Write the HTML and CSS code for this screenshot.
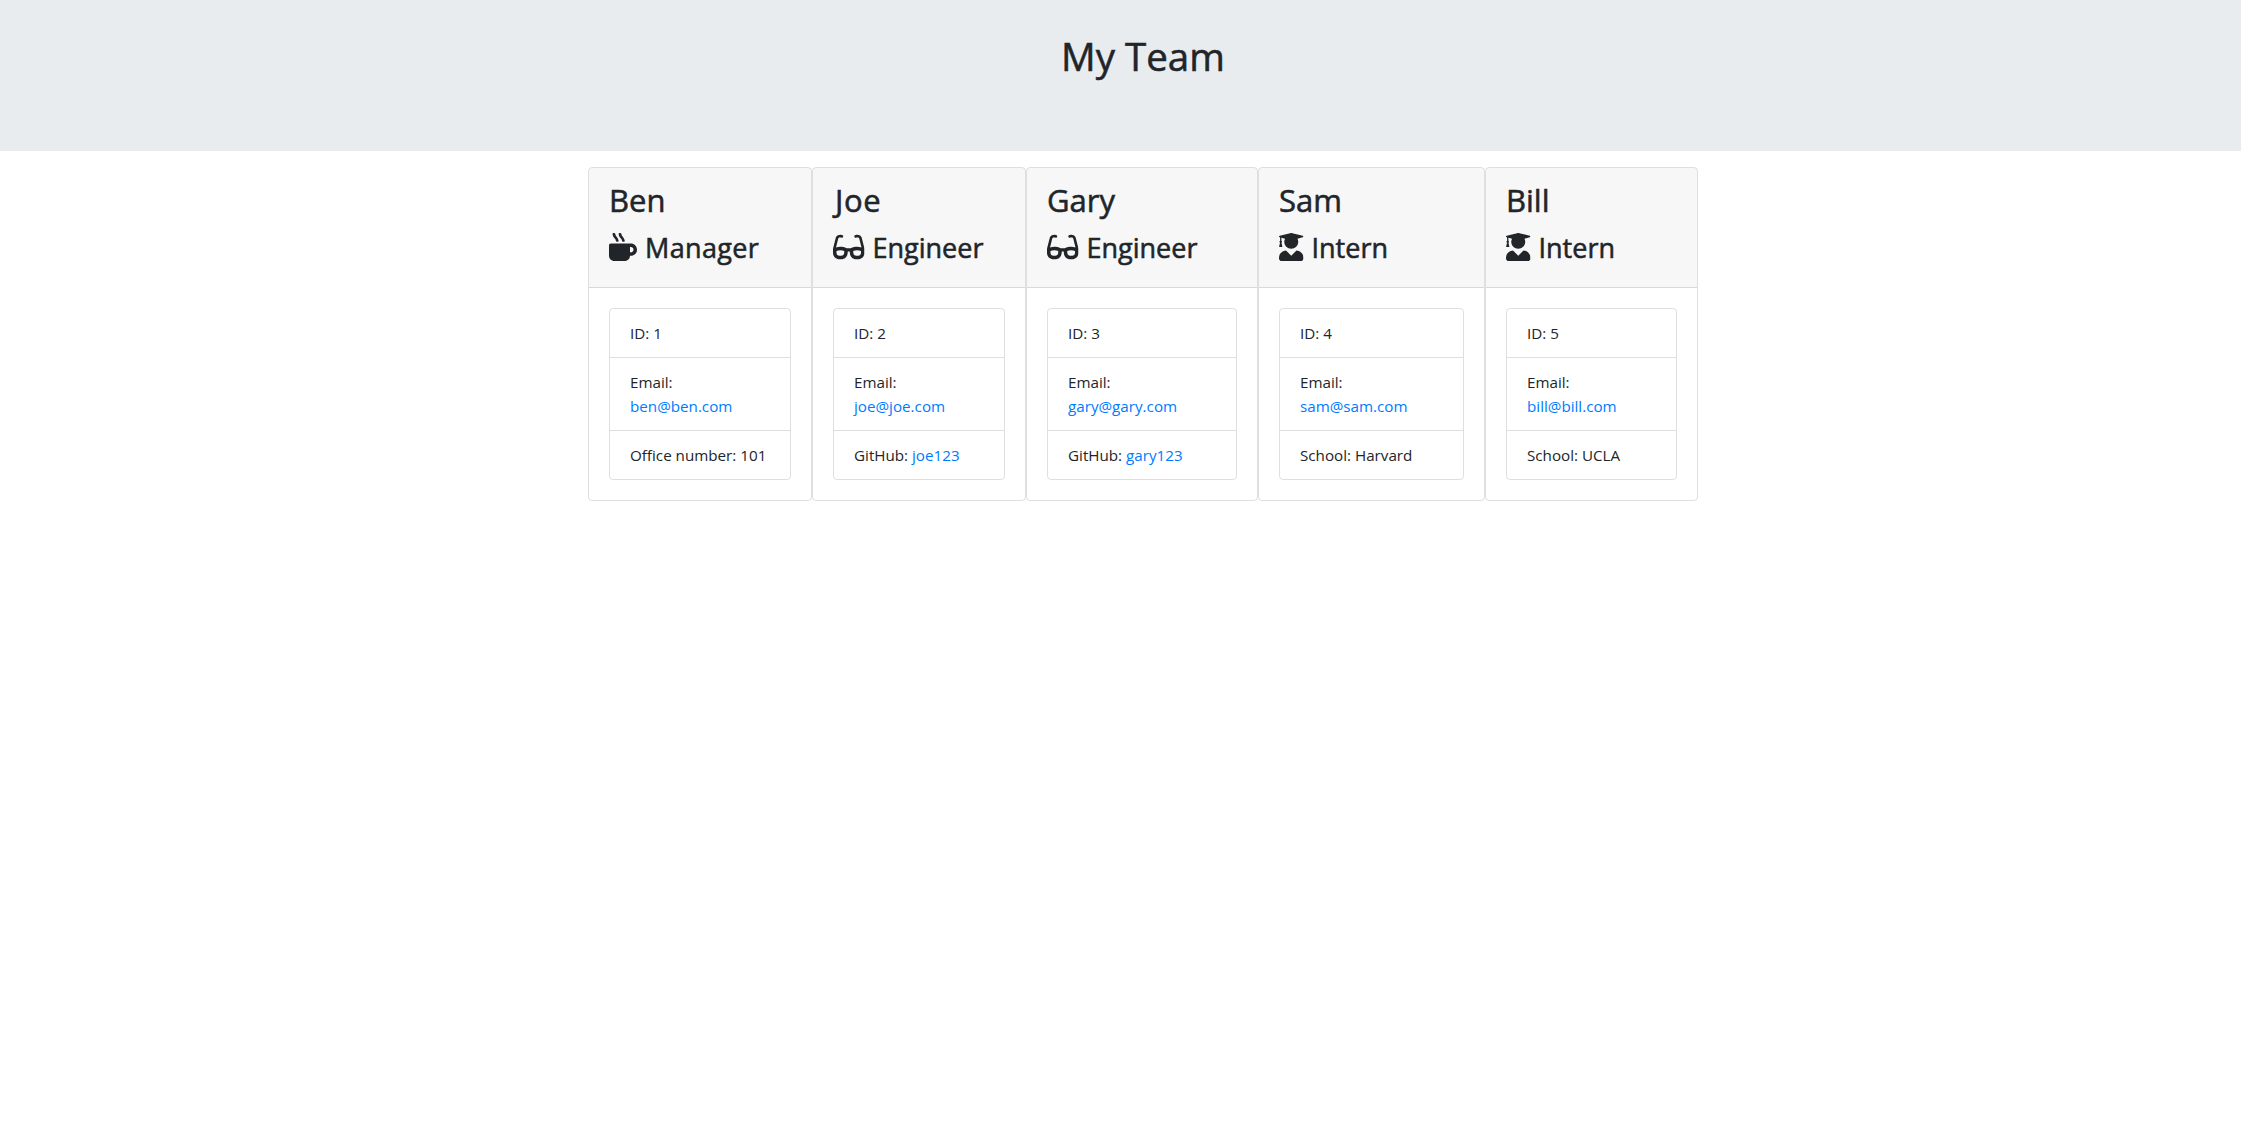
FILE: index.html
```html
<!DOCTYPE html>
<html lang="en">
<head>
<meta charset="utf-8">
<title>My Team</title>
<link rel="stylesheet" href="styles.css">
</head>
<body>
<svg class="sprite" aria-hidden="true">
  <symbol id="mug" viewBox="0 0 512 512"><path d="M127.1 146.5c1.3 7.7 8 13.5 16 13.5h16.5c9.8 0 17.6-8.5 16.3-18-3.8-28.2-16.4-54.2-36.6-74.7-14.4-14.7-23.6-33.3-26.4-53.5C111.8 5.9 105 0 96.8 0H80.4C70.6 0 63 8.5 64.1 18c3.9 31.9 18 61.3 40.6 84.4 12 12.2 19.7 27.5 22.4 44.1zm112 0c1.3 7.7 8 13.5 16 13.5h16.5c9.8 0 17.6-8.5 16.3-18-3.8-28.2-16.4-54.2-36.6-74.7-14.4-14.7-23.6-33.3-26.4-53.5C223.8 5.9 217 0 208.8 0h-16.4c-9.8 0-17.5 8.5-16.3 18 3.9 31.9 18 61.3 40.6 84.4 12 12.2 19.7 27.5 22.4 44.1zM400 192H32c-17.7 0-32 14.3-32 32v192c0 53 43 96 96 96h192c53 0 96-43 96-96h16c61.8 0 112-50.2 112-112s-50.2-112-112-112zm0 160h-16v-96h16c26.5 0 48 21.5 48 48s-21.5 48-48 48z"/></symbol>
  <symbol id="glasses" viewBox="0 0 576 512"><path d="M574.1 280.37L528.75 98.66c-5.91-23.7-21.59-44.05-43-55.81-21.44-11.73-46.97-14.11-70.19-6.33l-15.25 5.08c-8.39 2.79-12.92 11.86-10.12 20.24l5.06 15.18c2.79 8.38 11.85 12.91 20.23 10.12l13.18-4.39c10.87-3.62 23-3.57 33.16 1.73 10.29 5.37 17.57 14.56 20.37 25.82l38.46 153.82c-22.19-6.81-49.79-12.46-81.2-12.46-34.77 0-73.98 7.02-114.85 26.74h-73.18c-40.87-19.74-80.08-26.75-114.86-26.75-31.42 0-59.02 5.65-81.21 12.46l38.46-153.83c2.79-11.25 10.09-20.45 20.38-25.81 10.16-5.3 22.28-5.35 33.15-1.73l13.17 4.39c8.38 2.79 17.44-1.74 20.23-10.12l5.06-15.18c2.8-8.38-1.73-17.45-10.12-20.24l-15.25-5.08c-23.22-7.78-48.75-5.41-70.19 6.33-21.41 11.77-37.09 32.11-43 55.81L1.9 280.37A64.218 64.218 0 0 0 0 295.86v70.25C0 429.01 51.58 480 115.2 480h37.12c60.28 0 110.37-45.94 114.88-105.37l2.93-38.63h35.75l2.93 38.63C313.31 434.06 363.4 480 423.68 480h37.12c63.62 0 115.2-50.99 115.2-113.88v-70.25c0-5.23-.64-10.43-1.9-15.5zm-370.72 89.42c-1.97 25.91-24.4 46.21-51.06 46.21H115.2C86.97 416 64 393.62 64 366.11v-37.54c18.12-6.49 43.42-12.92 72.58-12.92 23.86 0 47.26 4.33 69.93 12.92l-3.13 41.22zM512 366.12c0 27.51-22.97 49.88-51.2 49.88h-37.12c-26.67 0-49.1-20.3-51.06-46.21l-3.13-41.22c22.67-8.59 46.08-12.92 69.95-12.92 29.12 0 54.43 6.44 72.55 12.93v37.54z"/></symbol>
  <symbol id="graduate" viewBox="0 0 448 512"><path d="M319.4 320.6L224 416l-95.4-95.4C57.1 323.7 0 382.2 0 454.4v9.6c0 26.5 21.5 48 48 48h352c26.5 0 48-21.5 48-48v-9.6c0-72.2-57.1-130.7-128.6-133.8zM13.6 79.8l6.4 1.5v58.4c-7 4.2-12 11.5-12 20.3 0 8.4 4.6 15.4 11.1 19.7L3.5 242c-1.7 6.9 2.1 14 7.6 14h41.8c5.5 0 9.3-7.1 7.6-14l-15.6-62.3C51.4 175.4 56 168.4 56 160c0-8.8-5-16.1-12-20.3V87.1l66 15.9c-8.6 17.2-14 36.4-14 57 0 70.7 57.3 128 128 128s128-57.3 128-128c0-20.6-5.3-39.8-14-57l96.3-23.2c18.2-4.4 18.2-27.1 0-31.5l-190.4-46c-13-3.1-26.7-3.1-39.7 0L13.6 48.2c-18.1 4.4-18.1 27.2 0 31.6z"/></symbol>
</svg>
<header class="jumbotron"><h1>My Team</h1></header>
<main class="team">
  <section class="card">
    <div class="card-header"><h2>Ben</h2><h3><svg class="icon mug"><use href="#mug"/></svg><span class="role manager">Manager</span></h3></div>
    <div class="card-body"><ul>
      <li>ID: 1</li>
      <li>Email:<br><a href="mailto:ben@ben.com">ben@ben.com</a></li>
      <li>Office number: 101</li>
    </ul></div>
  </section>
  <section class="card">
    <div class="card-header"><h2 class="joe">Joe</h2><h3><svg class="icon glasses"><use href="#glasses"/></svg><span class="role engineer">Engineer</span></h3></div>
    <div class="card-body"><ul>
      <li>ID: 2</li>
      <li>Email:<br><a href="mailto:joe@joe.com">joe@joe.com</a></li>
      <li>GitHub: <a href="#joe123">joe123</a></li>
    </ul></div>
  </section>
  <section class="card">
    <div class="card-header"><h2>Gary</h2><h3><svg class="icon glasses"><use href="#glasses"/></svg><span class="role engineer">Engineer</span></h3></div>
    <div class="card-body"><ul>
      <li>ID: 3</li>
      <li>Email:<br><a href="mailto:gary@gary.com">gary@gary.com</a></li>
      <li>GitHub: <a href="#gary123">gary123</a></li>
    </ul></div>
  </section>
  <section class="card">
    <div class="card-header"><h2>Sam</h2><h3><svg class="icon graduate"><use href="#graduate"/></svg><span class="role intern">Intern</span></h3></div>
    <div class="card-body"><ul>
      <li>ID: 4</li>
      <li>Email:<br><a href="mailto:sam@sam.com">sam@sam.com</a></li>
      <li>School: Harvard</li>
    </ul></div>
  </section>
  <section class="card">
    <div class="card-header"><h2>Bill</h2><h3><svg class="icon graduate"><use href="#graduate"/></svg><span class="role intern">Intern</span></h3></div>
    <div class="card-body"><ul>
      <li>ID: 5</li>
      <li>Email:<br><a href="mailto:bill@bill.com">bill@bill.com</a></li>
      <li>School: UCLA</li>
    </ul></div>
  </section>
</main>
</body>
</html>
```
FILE: styles.css
```css
* { box-sizing: border-box; }
body {
  margin: 0;
  background: #fff;
  color: #212529;
  font: 400 15.2px/24px "Open Sans", "Noto Sans", sans-serif;
}
.sprite { display: none; }
h1, h2, h3, ul { margin: 0; padding: 0; }
h1, h2, .role { -webkit-text-stroke: .55px currentColor; }
.jumbotron {
  height: 151px;
  padding: 32px 0 0 45px;
  background: #e9ecef;
  text-align: center;
}
h1 { font-size: 38.5px; line-height: 48px; font-weight: 400; }
.team {
  display: grid;
  grid-template-columns: 224px 214px 232px 227px 213px;
  justify-content: center;
  padding: 16px 0 0 45px;
}
.card {
  height: 334px;
  border: 1px solid rgba(0, 0, 0, .125);
  border-radius: 4px;
  overflow: hidden;
}
.card-header {
  height: 120px;
  padding: 12px 20px;
  background: rgba(0, 0, 0, .03);
  border-bottom: 1px solid rgba(0, 0, 0, .125);
}
h2 { font-size: 31px; line-height: 40px; font-weight: 400; }
.joe { padding-left: 2px; letter-spacing: .7px; }
h3 {
  display: flex;
  align-items: center;
  gap: 8px;
  height: 34px;
  margin-top: 10px;
  font-size: 27px;
  line-height: 34px;
  font-weight: 400;
}
.role { padding-top: 1px; }
.manager { letter-spacing: .35px; }
.icon { flex: none; height: 28px; fill: currentColor; }
.icon.mug { width: 28px; }
.icon.glasses { width: 31.5px; }
.icon.graduate { width: 24.5px; }
.card-body { padding: 20px; }
ul {
  border: 1px solid rgba(0, 0, 0, .125);
  border-radius: 4px;
  list-style: none;
}
li { padding: 12px 20px; white-space: nowrap; }
li + li { border-top: 1px solid rgba(0, 0, 0, .125); }
a { color: #007bff; text-decoration: none; }
```
